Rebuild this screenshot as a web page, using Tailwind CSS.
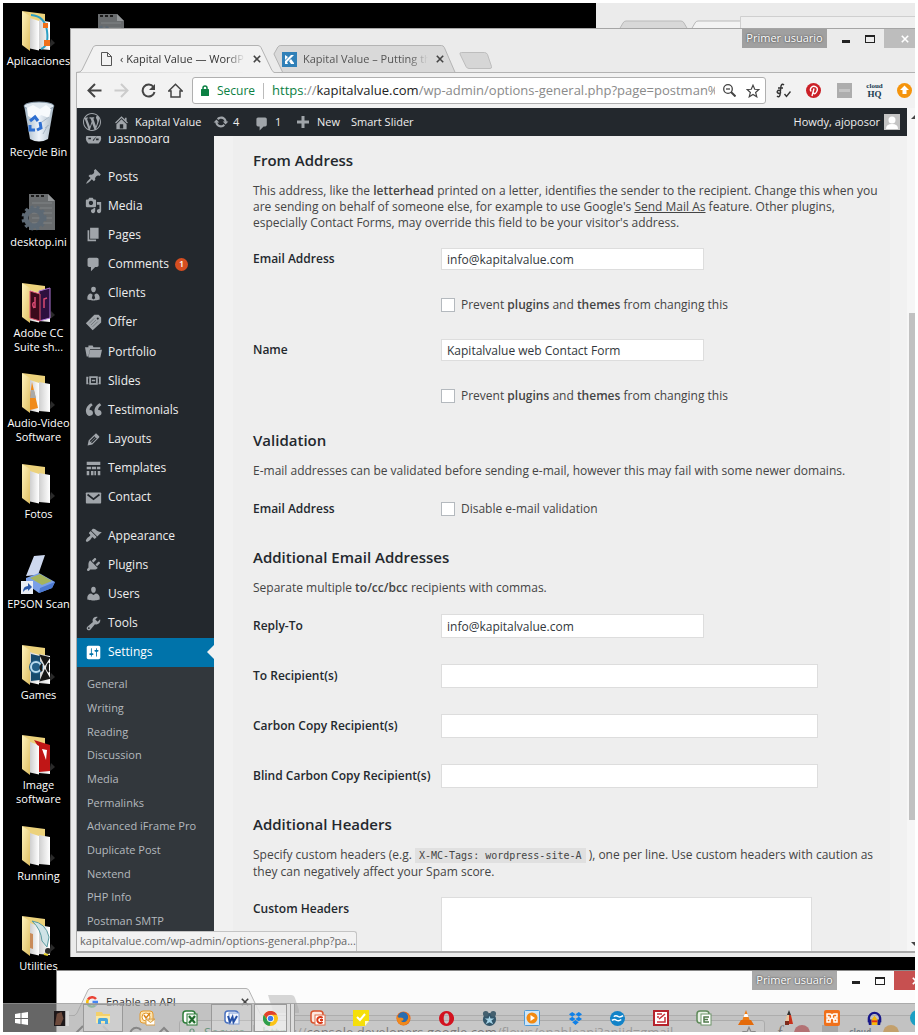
<!DOCTYPE html>
<html lang="en">
<head>
<meta charset="utf-8">
<title>Kapital Value — WordPress</title>
<script src="https://cdn.jsdelivr.net/npm/@tailwindcss/browser@4"></script>
</head>
<body class="h-screen overflow-hidden bg-white p-[3px] font-[family-name:'Open_Sans','Noto_Sans',sans-serif] text-xs text-[#444]">

<!-- Shared icon shapes -->
<svg class="absolute size-0" aria-hidden="true">
  <defs>
    <linearGradient id="gFront" x1="0" y1="0" x2="1" y2="1"><stop offset="0" stop-color="#fff3bd"/><stop offset="1" stop-color="#dfbf62"/></linearGradient>
    <linearGradient id="gPaper" x1="0" y1="0" x2="1" y2="0"><stop offset="0" stop-color="#cfcfcf"/><stop offset="1" stop-color="#ffffff"/></linearGradient>
    <linearGradient id="gBin" x1="0" y1="0" x2="1" y2="0"><stop offset="0" stop-color="#9fb2c2"/><stop offset=".5" stop-color="#eef4fa"/><stop offset="1" stop-color="#a7b8c6"/></linearGradient>
  </defs>
  <symbol id="folder" viewBox="0 0 36 42">
    <path d="M28 38l6-5-4-4z" fill="#2a2a2a"/>
    <path d="M1 1l23 3v10L9 12z" fill="#ecd27c"/>
    <path d="M18 10l11 2v28l-11-1z" fill="url(#gPaper)"/>
    <path d="M9 8l9 3v29.500l-9-2z" fill="url(#gPaper)"/>
    <path d="M1 1l8 5v35l-8-6z" fill="url(#gFront)"/>
  </symbol>
  <symbol id="ini" viewBox="0 0 36 38">
    <path d="M8 1h19l7 7v29H8z" fill="#696c6e"/><path d="M27 1l7 7h-7z" fill="#95989a"/>
    <path d="M10 3h3M15 3h3M20 3h3" stroke="#1c1c1c" stroke-width="2"/>
    <path d="M11 10h20M11 15h20M11 20h20M11 25h20M11 30h20" stroke="#818486"/>
    <circle cx="13" cy="25" r="8" fill="none" stroke="#5d6974" stroke-width="5"/>
    <circle cx="13" cy="25" r="11" fill="none" stroke="#5d6974" stroke-width="3" stroke-dasharray="3 3"/>
  </symbol>
  <symbol id="x" viewBox="0 0 10 10"><path d="M1 1l8 8M9 1l-8 8" stroke="currentColor" stroke-width="2" fill="none"/></symbol>
  <symbol id="comment" viewBox="0 0 20 20"><path d="M5 2h9c1.100 0 2 .9 2 2v7c0 1.100-.9 2-2 2h-2l-5 5v-5H5c-1.100 0-2-.9-2-2V4c0-1.100.9-2 2-2z"/></symbol>
</svg>

<div class="relative h-full w-full overflow-hidden bg-black">

  <!-- Desktop shortcuts -->
  <div class="absolute top-[7px] left-0 grid h-[996px] w-[71px] auto-rows-fr text-center text-[11px] leading-[14px] whitespace-nowrap text-white">
    <div class="flex flex-col items-center gap-[2px]"><svg class="h-[42px] w-9"><use href="#folder"/><path d="M10 5q14 1 16 16t-6 18" fill="none" stroke="#2b9fc4" stroke-width="2"/><rect x="22" y="13" width="5" height="5" fill="#f0701a"/><rect x="23" y="30" width="6" height="6" fill="#f0701a"/></svg><span>Aplicaciones</span></div>
    <div class="flex flex-col items-center gap-[2px]"><svg class="h-[42px] w-9" viewBox="0 0 36 42"><path d="M3 4h30l-6 34q-9 5-18 0z" fill="url(#gBin)"/><ellipse cx="18" cy="5" rx="15" ry="4" fill="#dfe8ef" stroke="#8799a8"/><path d="M6 7l6-3 7 4 6-4 5 4-2 9-8-3-6 5-7-4z" fill="#f7fafc"/><path d="M9 20l5-4 3 4M19 21l1 6-4 2M14 29H9l0-5" fill="none" stroke="#2e6fd0" stroke-width="3"/><path d="M21 21l7-5M22 33l5-9M24 27l4-3" stroke="#a9b8c6"/></svg><span>Recycle Bin</span></div>
    <div class="flex flex-col items-center gap-[2px]"><svg class="h-[42px] w-9"><use href="#ini"/></svg><span>desktop.ini</span></div>
    <div class="flex flex-col items-center gap-[2px]"><svg class="h-[42px] w-9"><use href="#folder"/><path d="M18 9l11-3v30l-11 3z" fill="#2d103f" stroke="#b077d8"/><path d="M9 9l10 3v27l-10-3z" fill="#3c0a1c" stroke="#e0556e"/><path d="M13 26q-3-5 1-6v-5 11M23 26v-9l3-1" fill="none" stroke="#d94a72" stroke-width="1.500"/></svg><span>Adobe CC<br>Suite sh...</span></div>
    <div class="flex flex-col items-center gap-[2px]"><svg class="h-[42px] w-9"><use href="#folder"/><path d="M11 10l6 26-8 2V24z" fill="#f08a1a"/><path d="M10 18l3 0 2 8H9z" fill="#a9a9a9"/></svg><span>Audio-Video<br>Software</span></div>
    <div class="flex flex-col items-center gap-[2px]"><svg class="h-[42px] w-9"><use href="#folder"/></svg><span>Fotos</span></div>
    <div class="flex flex-col items-center gap-[2px]"><svg class="h-[42px] w-9" viewBox="0 0 36 42"><path d="M13 3l11-1-7 20-12 1z" fill="#cdd8ef"/><path d="M5 25l13-5 16 9-3 6-13 5L5 31z" fill="#7aa0e8"/><path d="M9 25l10-4 12 7-10 4z" fill="#a5b45c"/><path d="M18 40l13-5 3-6-15 6z" fill="#4c79d2"/><rect x="-1" y="28" width="13" height="13" fill="#e9edf3"/><path d="M2 39q0-6 5-6v-3l4 4-4 4v-2q-3 0-5 3z" fill="#2a58a8"/></svg><span>EPSON Scan</span></div>
    <div class="flex flex-col items-center gap-[2px]"><svg class="h-[42px] w-9"><use href="#folder"/><path d="M10 10l9 2v24l-9 1z" fill="#174a6c"/><circle cx="15" cy="23" r="7" fill="#235f88"/><circle cx="15" cy="23" r="5" fill="none" stroke="#b9dbef" stroke-width="2"/><path d="M20 12l8 2-4 6zM20 36l8-2-4-7zM21 20q-3 4 0 7M28 19q-4 5 0 9" fill="#161616" stroke="#161616" stroke-width="2"/></svg><span>Games</span></div>
    <div class="flex flex-col items-center gap-[2px]"><svg class="h-[42px] w-9"><use href="#folder"/><path d="M13 6l16 5v26l-11 1V14z" fill="#c01616"/><path d="M9 8l9 4v28l-9-3z" fill="url(#gPaper)"/><path d="M21 15l5 1-1 10z" fill="#fff"/></svg><span>Image<br>software</span></div>
    <div class="flex flex-col items-center gap-[2px]"><svg class="h-[42px] w-9"><use href="#folder"/></svg><span>Running</span></div>
    <div class="flex flex-col items-center gap-[2px]"><svg class="h-[42px] w-9"><use href="#folder"/><path d="M11 6q14 2 17 16l-2 10-5-6q-1-12-10-20z" fill="#cfe3e6" stroke="#5a9ba0"/><path d="M9 18l3 1v15l-3-1z" fill="#c98b5a"/><circle cx="27" cy="36" r="3" fill="#2a2a2a"/><path d="M23 39l4 1" stroke="#e5d02a" stroke-width="2"/></svg><span>Utilities</span></div>
  </div>
  <svg class="absolute top-[10px] left-[87px] h-[38px] w-9"><use href="#ini"/></svg>

  <!-- Window behind, upper right -->
  <div class="absolute top-0 right-0 flex h-8 w-[319px] items-end bg-[#ebebeb]" aria-hidden="true">
    <svg class="h-full w-full" viewBox="0 0 319 32" preserveAspectRatio="xMaxYMin slice">
      <path d="M20 32l7-12q1-2 3-2h55q2 0 3 2l7 12" fill="#d8d8d8" stroke="#b9b9b9"/>
      <path d="M92 32l7-12q1-2 3-2h60v14" fill="#f3f3f3" stroke="#b9b9b9"/>
      <path d="M144.500 40V13.500H330V40z" fill="#efefef" stroke="#cfcfcf"/>
    </svg>
  </div>

  <!-- Console window, lower edge -->
  <section class="absolute top-[967px] right-0 bottom-0 left-[53px] border-l border-t border-[#888] bg-[#fcfcfc]" aria-label="Enable an API">
    <div class="flex h-[44px] items-start justify-between">
      <div class="relative mt-[17px] ml-[14px] h-7 w-[196px]">
        <svg class="absolute inset-0 h-full w-full" viewBox="0 0 196 28" preserveAspectRatio="none"><path d="M0 28q5 0 6-3L17 2q1-1.500 3-1.500h155q2 0 3 2l11 23q1 2.500 6 2.500" fill="#f1f1f1" stroke="#b3b3b3"/></svg>
        <div class="relative flex h-full items-center gap-2 pr-[18px] pl-[15px] text-[#333]">
          <svg class="size-3" viewBox="0 0 24 24" fill="none" stroke-width="5"><path d="M20 6A10 10 0 0 0 4 7" stroke="#ea4335"/><path d="M4 7a10 10 0 0 0 0 10" stroke="#fbbc05"/><path d="M4 17a10 10 0 0 0 14 2" stroke="#34a853"/><path d="M18 19q4-3 4-7h-9" stroke="#4285f4"/></svg>
          <span class="flex-1 text-[11px]">Enable an API</span>
          <button type="button" aria-label="Close tab"><svg class="size-2 text-[#444]"><use href="#x"/></svg></button>
        </div>
      </div>
      <svg class="mt-6 h-5 w-8" viewBox="0 0 32 20"><path d="M1 0h23q3 0 4 3l5 15H9q-2 0-3-2z" fill="#d6d6d6"/></svg>
      <div class="flex flex-1 justify-end">
        <span class="flex h-[19px] w-[85px] items-center justify-center bg-[#a9a9a9] text-[11px] text-white text-shadow-[0_0_2px_#222]">Primer usuario</span>
        <button type="button" aria-label="Minimize" class="flex h-[19px] w-[38px] items-center justify-center"><span class="mt-1 h-[3px] w-2 bg-[#222]"></span></button>
        <button type="button" aria-label="Maximize" class="flex h-[19px] w-[19px] items-center"><span class="h-2 w-[10px] border border-t-2 border-[#222]"></span></button>
        <button type="button" aria-label="Close" class="flex h-[19px] w-[21px] items-center overflow-hidden bg-[#c75050] pl-[18px] text-white"><svg class="size-2 shrink-0" viewBox="0 0 10 10"><use href="#x"/></svg></button>
      </div>
    </div>
    <div class="flex h-[34px] items-center border-t border-[#bbb] bg-[#f2f2f2] px-4 text-[13px] text-[#888]">
      <svg class="h-4 w-[106px]" viewBox="0 0 106 16" fill="none" stroke="#555" stroke-width="2"><path d="M10 1L3 8l7 7M68 5a6 6 0 1 0 1 6M84 10l7-7 7 7"/><path d="M30 1l7 7-7 7" stroke="#ccc"/></svg>
      <div class="flex h-[26px] flex-1 items-center gap-2 rounded-[3px] border border-[#b5b5b5] bg-white px-2 whitespace-nowrap">
        <svg class="h-3 w-2" viewBox="0 0 10 12"><path d="M2.500 6V3.500a2.500 2.500 0 0 1 5 0V6" fill="none" stroke="#0b8043" stroke-width="1.500"/><rect y="5" width="10" height="7" fill="#0b8043"/></svg>
        <span class="text-[#0b8043]">Secure</span><span class="h-4 w-px bg-[#ccc]"></span>
        <span class="flex-1"><span class="text-[#0b8043]">https</span>://<span class="text-[#333]">console.developers.google.com</span>/flows/enableapi?apiid=gmail</span>
        <svg class="size-[14px]" viewBox="0 0 24 24" fill="none" stroke="#555" stroke-width="2"><path d="M12 2l3 7 7 .500-5.500 5 2 7.500-6.500-4-6.500 4 2-7.500L2 9.500 9 9z"/></svg>
      </div>
      <div class="flex w-[134px] items-center justify-between pl-3">
        <span class="font-[family-name:'Liberation_Serif'] text-lg text-[#333] italic">f</span><span class="size-4 rounded-full bg-[#cb2027]"></span><span class="size-4 bg-[#aaa]"></span><span class="text-[8px] font-bold text-[#1d4257]">cloud</span><span class="size-4 rounded-full bg-[#f59a12]"></span>
      </div>
    </div>
  </section>

  <!-- Main browser window -->
  <section class="absolute top-[25px] right-0 bottom-[75px] left-[67px] flex flex-col border-l border-t border-[#a5a5a5] bg-[#ebebeb] pb-1 pl-[5px]" aria-label="Browser">
    <div class="flex h-[44px] shrink-0 items-start">
      <div class="relative z-10 mt-4 h-[28px] w-[203px] shrink-0">
        <svg class="absolute inset-0 h-full w-full" viewBox="0 0 203 28" preserveAspectRatio="none"><path d="M0 27.500q5 0 6-2.500L17 2.500Q18 .500 20 .500h162q2 0 3 2l11 23q1 2.500 6 2.500" fill="#f2f2f2" stroke="#b3b3b3"/></svg>
        <div class="relative flex h-full items-center pr-[18px] pl-[25px] text-[11px] text-[#333]">
          <svg class="h-[14px] w-[11px]" viewBox="0 0 11 14" fill="none" stroke="#555"><path d="M.5.500h6l4 4v9H.5zM6.500.500v4h4"/></svg>
          <span class="ml-2 flex-1 overflow-hidden mask-r-from-85% whitespace-nowrap">‹ Kapital Value — WordPress</span>
          <button type="button" aria-label="Close tab" class="ml-2"><svg class="size-2 text-[#444]" viewBox="0 0 10 10"><use href="#x"/></svg></button>
        </div>
      </div>
      <div class="relative -ml-2 mt-4 h-[28px] w-[190px] shrink-0">
        <svg class="absolute inset-0 h-full w-full" viewBox="0 0 194 28" preserveAspectRatio="none"><path d="M12 27.500L3 9 7 2q1-1.500 3-1.500h164q2 0 3 2l11 25z" fill="#d9d9d9" stroke="#b3b3b3"/></svg>
        <div class="relative flex h-full items-center pr-[17px] pl-[11px] text-[11px] text-[#555]">
          <svg class="size-[15px]" viewBox="0 0 15 15"><rect width="15" height="15" fill="#3080b8"/><path d="M3 3v5l3-3zM12 3H9L3 9v3h3l-1-2zM7 9l2-2 3 4v1H9z" fill="#fff"/></svg>
          <span class="ml-[6px] flex-1 overflow-hidden mask-r-from-85% whitespace-nowrap">Kapital Value – Putting the value</span>
          <button type="button" aria-label="Close tab" class="ml-2"><svg class="size-2 text-[#444]" viewBox="0 0 10 10"><use href="#x"/></svg></button>
        </div>
      </div>
      <button type="button" aria-label="New tab" class="mt-[23px] ml-[-2px]"><svg class="h-[17px] w-[33px]" viewBox="0 0 33 17"><path d="M2.500.500h23q2 0 3 2l4 12q.500 2-1.500 2H10q-2 0-3-2L1 2Q.500.500 2.500.500z" fill="#d6d6d6" stroke="#bdbdbd"/></svg></button>
      <div class="flex flex-1 justify-end">
        <span class="flex h-[19px] w-[85px] items-center justify-center bg-[#a0a0a0] text-[11px] text-white text-shadow-[0_0_2px_#222]">Primer usuario</span>
        <button type="button" aria-label="Minimize" class="flex h-[19px] w-[38px] items-center justify-center"><span class="mt-[6px] h-[3px] w-2 bg-[#222]"></span></button>
        <button type="button" aria-label="Maximize" class="flex h-[19px] w-[19px] items-center"><span class="h-2 w-[10px] border border-t-2 border-[#222]"></span></button>
        <button type="button" aria-label="Close" class="flex h-[19px] w-[31px] items-center bg-[#bdbdbd] pl-[17px] text-white"><svg class="size-2" viewBox="0 0 10 10"><use href="#x"/></svg></button>
      </div>
    </div>

    <!-- Address toolbar -->
    <div class="-mt-px flex h-9 shrink-0 items-center border-t border-l border-[#b3b3b3] bg-[#f2f2f2] pl-[10px]">
      <div class="flex w-[105px] gap-3 text-[#444]">
        <button type="button" aria-label="Back"><svg class="size-[15px]" viewBox="0 0 15 15" fill="none" stroke="currentColor" stroke-width="2"><path d="M14.500 7.500H2M8 1L1.500 7.500 8 14"/></svg></button>
        <button type="button" aria-label="Forward" disabled class="text-[#ccc]"><svg class="size-[15px]" viewBox="0 0 15 15" fill="none" stroke="currentColor" stroke-width="2"><path d="M.5 7.500H13M7 1l6.500 6.500L7 14"/></svg></button>
        <button type="button" aria-label="Reload"><svg class="size-[15px]" viewBox="0 0 15 15"><path d="M12.500 4a6 6 0 1 0 1 5" fill="none" stroke="currentColor" stroke-width="2"/><path d="M14 1v6H8z" fill="currentColor"/></svg></button>
        <button type="button" aria-label="Home"><svg class="size-[15px]" viewBox="0 0 15 15" fill="none" stroke="currentColor" stroke-width="1.500"><path d="M.7 8l6.800-6.800L14.300 8H12v6H3V8z"/></svg></button>
      </div>
      <div class="flex h-[27px] min-w-0 flex-1 items-center rounded-[3px] border border-[#b0b0b0] bg-white pr-[5px] pl-2">
        <svg class="h-[11px] w-2 shrink-0" viewBox="0 0 8 11"><path d="M2 5V3a2 2 0 0 1 4 0v2" fill="none" stroke="#0b8043" stroke-width="1.500"/><rect y="4" width="8" height="7" rx=".5" fill="#0b8043"/></svg>
        <span class="ml-2 text-[#0b8043]">Secure</span>
        <span class="mx-2 h-4 w-px shrink-0 bg-[#bbb]"></span>
        <div role="textbox" aria-label="Address" tabindex="0" class="min-w-0 flex-1 overflow-hidden text-[13px] whitespace-nowrap text-[#8a8a8a]"><span class="text-[#0b8043]">https</span>://<span class="text-[#222]">kapitalvalue.com</span>/wp-admin/options-general.php?page=postman%2Fconfig</div>
        <button type="button" aria-label="Zoom out" class="ml-2 text-[#444]"><svg class="size-[13px]" viewBox="0 0 13 13" fill="none" stroke="currentColor" stroke-width="1.300"><circle cx="5" cy="5" r="4.300"/><path d="M3 5h4"/><path d="M8 8l4.500 4.500" stroke-width="2"/></svg></button>
        <button type="button" aria-label="Bookmark" class="ml-[10px] text-[#444]"><svg class="size-[14px]" viewBox="0 0 24 24" fill="none" stroke="currentColor" stroke-width="2"><path d="M12 2l3 7 7 .5-5.500 5 2 7.500-6.500-4-6.500 4 2-7.500L2 9.500 9 9z"/></svg></button>
      </div>
      <div class="flex w-[149px] shrink-0 items-center pl-[10px]">
        <button type="button" aria-label="Math extension" class="w-[18px]"><svg class="h-4 w-[15px]" viewBox="0 0 15 16" fill="none" stroke="#333" stroke-width="1.400"><path d="M8 2q-2-2-3 1L4 12q-1 3-3 1M2 5h5M5 9.500a2 1.500 0 1 1-1-2M8.500 11l2 2.500 4-5"/></svg></button>
        <button type="button" aria-label="Pin" class="ml-3"><svg class="size-[15px]" viewBox="0 0 15 15"><circle cx="7.500" cy="7.500" r="7.500" fill="#cb2027"/><path d="M5 8.500Q3.500 6 5.500 4.200T10 4t.500 5-3 .5M8 5.500L6 13" fill="none" stroke="#fff" stroke-width="1.400"/></svg></button>
        <button type="button" aria-label="Extension" class="ml-4 flex size-[15px] items-center bg-[#adadad] px-[2px]"><span class="h-[3px] w-full bg-[#c4c4c4]"></span></button>
        <button type="button" aria-label="cloudHQ" class="ml-[14px] flex w-[17px] flex-col items-center font-[family-name:'Liberation_Serif',serif] text-[9px] leading-[9px] font-bold text-[#173a50]"><span class="text-[7px] leading-[7px]">cloud</span><span>HQ</span></button>
        <button type="button" aria-label="Updates" class="ml-[14px]"><svg class="size-[15px]" viewBox="0 0 15 15"><circle cx="7.500" cy="7.500" r="7.500" fill="#f5940c"/><path d="M7.500 2.500L12 7H9.500v4h-4V7H3z" fill="#fff"/></svg></button>
      </div>
    </div>

    <!-- Page -->
    <div class="relative flex min-h-0 flex-1 border-b-2 border-l border-[#a9a9a9] bg-[#f1f1f1]">
      <div class="flex min-w-0 flex-1 flex-col">
        <header class="z-10 flex h-7 shrink-0 items-center bg-[#23282d] pr-[7px] pl-[6px] text-[11px] text-[#eee]">
          <svg class="size-[18px]" viewBox="0 0 20 20" fill="#a0a5aa"><path d="M20 10c0-5.510-4.490-10-10-10C4.480 0 0 4.490 0 10c0 5.520 4.480 10 10 10 5.510 0 10-4.480 10-10zM7.780 15.370L4.370 6.220c.55-.02 1.170-.08 1.170-.08.5-.06.44-1.130-.06-1.110 0 0-1.450.11-2.370.11-.18 0-.37 0-.58-.01C4.120 2.690 6.870 1.110 10 1.110c2.330 0 4.450.87 6.050 2.340-.68-.11-1.650.39-1.650 1.580 0 .74.45 1.360.9 2.100.35.61.55 1.360.55 2.460 0 1.490-1.400 5-1.400 5l-3.030-8.370c.54-.02.82-.17.82-.17.5-.05.44-1.250-.06-1.220 0 0-1.440.12-2.380.12-.87 0-2.330-.12-2.330-.12-.5-.03-.56 1.200-.06 1.220l.92.08 1.260 3.410zM17.410 10c.24-.64.74-1.870.43-4.250.7 1.290 1.050 2.710 1.050 4.250 0 3.290-1.730 6.240-4.400 7.780.97-2.590 1.940-5.200 2.920-7.780zM6.100 18.090C3.120 16.650 1.110 13.530 1.110 10c0-1.300.23-2.480.72-3.590C3.250 10.300 4.670 14.200 6.100 18.090zm4.030-6.630l2.580 6.980c-.86.29-1.760.45-2.710.45-.79 0-1.570-.11-2.290-.33.81-2.380 1.620-4.740 2.420-7.100z"/></svg>
          <a href="#" class="ml-3 flex w-[100px] items-center gap-[5px]"><svg class="size-[17px]" viewBox="0 0 20 20" fill="#a0a5aa"><path d="M16 8.500l1.530 1.530-1.060 1.060L10 4.600l-6.470 6.490-1.060-1.060L10 2.500l4 4v-2h2v4zm-6-2.460l6 5.990V18H4v-5.970zM12 17v-5H8v5h4z"/></svg>Kapital Value</a>
          <a href="#" class="flex w-[41px] items-center gap-1"><svg class="size-4" viewBox="0 0 20 20" fill="#a0a5aa"><path d="M10.200 3.280c3.530 0 6.430 2.610 6.920 6h2.080l-3.500 4-3.500-4h2.320c-.45-1.970-2.210-3.450-4.320-3.450-1.450 0-2.730.71-3.540 1.780L4.950 5.660C6.230 4.200 8.110 3.280 10.200 3.280zm-.4 13.440c-3.520 0-6.430-2.610-6.920-6H.8l3.500-4c1.170 1.330 2.330 2.670 3.500 4H5.480c.45 1.970 2.210 3.450 4.320 3.450 1.450 0 2.730-.71 3.540-1.780l1.710 1.950c-1.280 1.460-3.150 2.380-5.250 2.380z"/></svg>4</a>
          <a href="#" class="flex w-[43px] items-center gap-[5px]"><svg class="mt-1 size-4" fill="#a0a5aa"><use href="#comment"/></svg>1</a>
          <a href="#" class="flex w-[54px] items-center gap-[8px]"><svg class="size-3" viewBox="0 0 12 12"><path d="M6 0v12M0 6h12" stroke="#a0a5aa" stroke-width="3"/></svg>New</a>
          <a href="#">Smart Slider</a>
          <a href="#" class="ml-auto flex items-center gap-1">Howdy, ajoposor<svg class="size-4" viewBox="0 0 16 16"><rect width="16" height="16" fill="#c4c4c4"/><circle cx="8" cy="6" r="3.500" fill="#fff"/><path d="M2 15q0-5 6-5t6 5z" fill="#fff"/></svg></a>
        </header>

        <div class="flex min-h-0 flex-1">
          <!-- Admin menu -->
          <nav class="flex w-[137px] shrink-0 flex-col overflow-hidden bg-[#23282d] text-[#eee]">
            <a href="#" class="-mt-3 flex h-[29px] shrink-0 items-center gap-[6px] pl-2"><svg class="size-[17px]" viewBox="0 0 20 20" fill="#a0a5aa"><path fill-rule="evenodd" d="M4 16a9 8 0 1 1 12 0zM10 13l4-6-5 5zM4 9h3v2H4zM13 10h3v2h-3zM9 5h2v2H9z"/></svg>Dashboard</a>
            <div class="mt-[9px] grid h-[350px] shrink-0 auto-rows-fr">
              <a href="#" class="flex items-center gap-[6px] pl-2"><svg class="size-[17px]" viewBox="0 0 20 20" fill="#a0a5aa"><path d="M10.440 3.020l1.820-1.820 6.360 6.350-1.830 1.820c-1.050-.68-2.480-.57-3.410.36l-.75.75c-.92.93-1.040 2.350-.35 3.410l-1.830 1.820-2.410-2.410-2.800 2.790c-.42.42-3.380 2.710-3.800 2.290s1.860-3.390 2.280-3.810l2.790-2.790L4.100 9.360l1.830-1.820c1.050.69 2.480.57 3.400-.36l.75-.75c.93-.92 1.050-2.350.36-3.410z"/></svg>Posts</a>
              <a href="#" class="flex items-center gap-[6px] pl-2"><svg class="size-[17px]" viewBox="0 0 20 20" fill="#a0a5aa"><path d="M13 11V4c0-.55-.45-1-1-1h-1.670L9 1H5L3.670 3H2c-.55 0-1 .45-1 1v7c0 .55.45 1 1 1h10c.55 0 1-.45 1-1zM7 4.500c1.380 0 2.500 1.120 2.500 2.500S8.380 9.500 7 9.500 4.500 8.380 4.500 7 5.620 4.500 7 4.500zM14 6h5v10.500c0 1.380-1.120 2.500-2.500 2.500S14 17.880 14 16.500s1.120-2.500 2.500-2.500c.17 0 .34.02.5.05V9h-3V6zm-4 8.050V13h2v3.500c0 1.380-1.120 2.500-2.500 2.500S7 17.880 7 16.500 8.120 14 9.500 14c.17 0 .34.02.5.05z"/></svg>Media</a>
              <a href="#" class="flex items-center gap-[6px] pl-2"><svg class="size-[17px]" viewBox="0 0 20 20" fill="#a0a5aa"><path d="M6 15V2h10v13H6zm-1 1h8v2H3V5h2v11z"/></svg>Pages</a>
              <a href="#" class="flex items-center gap-[6px] pl-2"><svg class="size-[17px]" fill="#a0a5aa"><use href="#comment"/></svg>Comments<span class="flex size-[13px] items-center justify-center rounded-full bg-[#d54e21] text-[9px] font-semibold text-white">1</span></a>
              <a href="#" class="flex items-center gap-[6px] pl-2"><svg class="size-[17px]" viewBox="0 0 20 20" fill="#a0a5aa"><path d="M10 8.500c-2.200 0-2.700-3-2.700-3C7 3.500 7.800 2 10 2s3 1.500 2.700 3.500c0 0-.5 3-2.700 3z"/><path d="M7 10l2 1.500-1 4 2 1.500 2-1.500-1-4L13 10c2.500 0 4.200 2.300 4.200 4.500V17s-3.600 1.100-7.200 1.100S2.800 17 2.800 17v-2.500C2.800 12.300 4.500 10 7 10z"/></svg>Clients</a>
              <a href="#" class="flex items-center gap-[6px] pl-2"><svg class="size-[17px]" viewBox="0 0 20 20" fill="#a0a5aa"><path fill-rule="evenodd" d="M1 11L11 1h5l3 3v6L9 19zM15 4a1.200 1.200 0 1 0 .1 0z"/><path d="M5 11l6-6M7 13l6-6M9 15l6-6" stroke="#6c7277"/></svg>Offer</a>
              <a href="#" class="flex items-center gap-[6px] pl-2"><svg class="size-[17px]" viewBox="0 0 20 20" fill="#a0a5aa"><path d="M0 5h4V3h5l1 2h8v2H6L4 16H2zM6 8h14l-2 9H4z"/></svg>Portfolio</a>
              <a href="#" class="flex items-center gap-[6px] pl-2"><svg class="size-[17px]" viewBox="0 0 20 20" fill="none" stroke="#a0a5aa" stroke-width="2"><rect x="6" y="6" width="8" height="8"/><path d="M4 6.500H2.500v7H4M16 6.500h1.500v7H16M8 10h4"/></svg>Slides</a>
              <a href="#" class="flex items-center gap-[6px] pl-2"><svg class="size-[17px]" viewBox="2 2 16 16" fill="#a0a5aa"><path d="M9.490 13.220c0-.74-.2-1.380-.61-1.900-.62-.78-1.830-.88-2.530-.72-.29-1.650 1.110-3.750 2.920-4.650L7.880 4c-2.730 1.300-5.420 4.280-4.960 8.050C3.210 14.430 4.590 16 6.540 16c.85 0 1.560-.25 2.120-.75s.83-1.180.83-2.030zm8.050 0c0-.74-.2-1.380-.61-1.900-.63-.78-1.830-.88-2.530-.72-.29-1.650 1.110-3.750 2.920-4.650L15.930 4c-2.730 1.300-5.410 4.280-4.950 8.050.29 2.380 1.660 3.950 3.610 3.950.85 0 1.560-.25 2.120-.75s.83-1.180.83-2.030z"/></svg>Testimonials</a>
              <a href="#" class="flex items-center gap-[6px] pl-2"><svg class="size-[17px]" viewBox="0 0 20 20" fill="#a0a5aa"><path d="M13.890 3.390l2.710 2.720c.46.46.42 1.240.03 1.640l-8.010 8.020-5.560 1.160 1.160-5.580s7.600-7.630 7.990-8.030c.39-.39 1.220-.39 1.680.07zm-2.730 2.790l-5.590 5.610 1.110 1.110 5.540-5.650zm-2.970 8.230l5.580-5.600-1.070-1.080-5.590 5.600z"/></svg>Layouts</a>
              <a href="#" class="flex items-center gap-[6px] pl-2"><svg class="size-[17px]" viewBox="0 0 20 20" fill="#a0a5aa"><path d="M2 2h16v4H2zM2 8h5v3H2zM8 8h5v3H8zM14 8h4v3h-4zM2 13h3v5H2zM7 13h3v5H7zM11 13h2v5h-2zM15 13h3v5h-3z"/></svg>Templates</a>
              <a href="#" class="flex items-center gap-[6px] pl-2"><svg class="size-[17px]" viewBox="0 0 20 20"><rect x="1" y="4" width="18" height="13" rx="1" fill="#a0a5aa"/><path d="M3 6.500l7 5.500 7-5.500" fill="none" stroke="#23282d" stroke-width="2"/></svg>Contact</a>
            </div>
            <div class="mt-[9px] grid h-[146px] shrink-0 auto-rows-fr">
              <a href="#" class="flex items-center gap-[6px] pl-2"><svg class="size-[17px]" viewBox="0 0 20 20" fill="#a0a5aa"><path d="M14.480 11.060L7.410 3.990l1.500-1.500c.5-.56 2.300-.47 3.510.32 1.210.8 1.430 1.280 2.910 2.100 1.180.64 2.450 1.260 4.450.85zm-.71.710L6.700 4.700 4.930 6.470c-.39.39-.39 1.020 0 1.410l1.060 1.060c.39.39.39 1.030 0 1.420-.6.6-1.430 1.110-2.210 1.690-.35.26-.7.53-1.010.84C1.430 14.230.4 16.080 1.400 17.070c.99 1 2.840-.03 4.180-1.360.31-.31.58-.66.85-1.020.57-.78 1.080-1.610 1.690-2.210.39-.39 1.020-.39 1.410 0l1.060 1.060c.39.39 1.020.39 1.410 0z"/></svg>Appearance</a>
              <a href="#" class="flex items-center gap-[6px] pl-2"><svg class="size-[17px]" viewBox="0 0 20 20" fill="#a0a5aa"><path d="M13.110 4.360L9.870 7.600 8 5.730l3.240-3.240c.35-.34 1.050-.2 1.560.32.52.51.66 1.210.31 1.550zm-8 1.770l.91-1.120 9.010 9.010-1.190.84c-.71.71-2.630 1.160-3.820 1.160H6.140L4.900 17.260c-.59.59-1.540.59-2.120 0-.59-.58-.59-1.530 0-2.120l1.240-1.240v-3.880c0-1.130.4-3.190 1.090-3.890zm7.260 3.970l3.240-3.240c.34-.35 1.040-.21 1.550.31.52.51.66 1.210.31 1.550l-3.240 3.250z"/></svg>Plugins</a>
              <a href="#" class="flex items-center gap-[6px] pl-2"><svg class="size-[17px]" viewBox="0 0 20 20" fill="#a0a5aa"><path d="M10 9.250c-2.270 0-2.730-3.440-2.730-3.440C7 4.020 7.820 2 9.970 2c2.160 0 2.980 2.020 2.710 3.810 0 0-.41 3.440-2.680 3.440zm0 2.570L12.720 10c2.390 0 4.520 2.330 4.520 4.530v2.490s-3.650 1.130-7.240 1.130c-3.650 0-7.240-1.130-7.240-1.130v-2.490c0-2.250 1.940-4.480 4.470-4.480z"/></svg>Users</a>
              <a href="#" class="flex items-center gap-[6px] pl-2"><svg class="size-[17px]" viewBox="0 0 20 20" fill="#a0a5aa"><path d="M16.680 9.770c-1.340 1.340-3.300 1.670-4.950.99l-5.410 6.520c-.99.99-2.590.99-3.580 0s-.99-2.590 0-3.570l6.520-5.420c-.68-1.650-.35-3.610.99-4.950 1.280-1.280 3.120-1.620 4.720-1.060l-2.890 2.890 2.820 2.820 2.860-2.870c.53 1.580.18 3.390-1.080 4.650zM3.810 16.210c.4.39 1.040.39 1.430 0 .4-.4.4-1.040 0-1.430-.39-.4-1.030-.4-1.430 0-.39.39-.39 1.030 0 1.430z"/></svg>Tools</a>
              <a href="#" aria-current="page" class="flex items-center gap-[6px] bg-[#0073aa] pl-2 text-white"><svg class="size-[17px]" viewBox="0 0 20 20" fill="#fff"><path d="M18 16V4c0-1.100-.9-2-2-2H4c-1.100 0-2 .9-2 2v12c0 1.100.9 2 2 2h12c1.100 0 2-.9 2-2zM8 11h1c.55 0 1 .45 1 1s-.45 1-1 1H8v1.500c0 .28-.22.5-.5.5s-.5-.22-.5-.5V13H6c-.55 0-1-.45-1-1s.45-1 1-1h1V5.500c0-.28.22-.5.5-.5s.5.22.5.5V11zm5-2h-1c-.55 0-1-.45-1-1s.45-1 1-1h1V5.500c0-.28.22-.5.5-.5s.5.22.5.5V7h1c.55 0 1 .45 1 1s-.45 1-1 1h-1v5.500c0 .28-.22.5-.5.5s-.5-.22-.5-.5V9z"/></svg><span class="flex-1">Settings</span><svg class="h-[14px] w-[7px]" viewBox="0 0 7 14"><path d="M7 0v14L0 7z" fill="#f1f1f1"/></svg></a>
            </div>
            <div class="min-h-[265px] flex-1 bg-[#32373c] pt-[6px]">
              <div class="grid h-[260px] auto-rows-fr items-center pl-[10px] text-[11px] text-[#b4b9be]">
                <a href="#">General</a><a href="#">Writing</a><a href="#">Reading</a><a href="#">Discussion</a><a href="#">Media</a><a href="#">Permalinks</a><a href="#">Advanced iFrame Pro</a><a href="#">Duplicate Post</a><a href="#">Nextend</a><a href="#">PHP Info</a><a href="#">Postman SMTP</a>
              </div>
            </div>
          </nav>

          <!-- Settings form -->
          <main class="min-w-0 flex-1 overflow-hidden pr-[17px] pl-[19px]">
            <form class="h-full bg-[#eee] pt-3 pl-5 whitespace-nowrap">
              <h2 class="text-[15px] leading-6 font-semibold text-[#23282d]">From Address</h2>
              <p class="mt-[11px] leading-4">This address, like the <b class="font-semibold">letterhead</b> printed on a letter, identifies the sender to the recipient. Change this when you<br>are sending on behalf of someone else, for example to use Google's <a href="#" class="underline">Send Mail As</a> feature. Other plugins,<br>especially Contact Forms, may override this field to be your visitor's address.</p>
              <div class="mt-[17px] grid grid-cols-[188px_1fr] items-center gap-y-[23px]">
                <label for="email" class="font-semibold text-[#23282d]">Email Address</label>
                <input id="email" type="text" value="info@kapitalvalue.com" class="h-[22px] w-[263px] border border-[#ddd] bg-white px-[5px] text-[#32373c]">
                <label class="col-start-2 flex h-[23px] items-center gap-[6px]"><input type="checkbox" class="size-[14px] appearance-none border border-[#b4b9be] bg-white"><span>Prevent <b class="font-semibold">plugins</b> and <b class="font-semibold">themes</b> from changing this</span></label>
                <label for="name" class="font-semibold text-[#23282d]">Name</label>
                <input id="name" type="text" value="Kapitalvalue web Contact Form" class="h-[22px] w-[263px] border border-[#ddd] bg-white px-[5px] text-[#32373c]">
                <label class="col-start-2 flex h-[23px] items-center gap-[6px]"><input type="checkbox" class="size-[14px] appearance-none border border-[#b4b9be] bg-white"><span>Prevent <b class="font-semibold">plugins</b> and <b class="font-semibold">themes</b> from changing this</span></label>
              </div>

              <h2 class="mt-[21px] text-[15px] leading-6 font-semibold text-[#23282d]">Validation</h2>
              <p class="mt-[11px] leading-4">E-mail addresses can be validated before sending e-mail, however this may fail with some newer domains.</p>
              <div class="mt-[18px] grid grid-cols-[188px_1fr] items-center">
                <span class="font-semibold text-[#23282d]">Email Address</span>
                <label class="flex h-[23px] items-center gap-[6px]"><input type="checkbox" class="size-[14px] appearance-none border border-[#b4b9be] bg-white">Disable e-mail validation</label>
              </div>

              <h2 class="mt-[25px] text-[15px] leading-6 font-semibold text-[#23282d]">Additional Email Addresses</h2>
              <p class="mt-[11px] leading-4">Separate multiple <b class="font-semibold">to/cc/bcc</b> recipients with commas.</p>
              <div class="mt-[18px] grid grid-cols-[188px_1fr] items-center gap-y-[26px] font-semibold text-[#23282d]">
                <label for="reply">Reply-To</label>
                <input id="reply" type="text" value="info@kapitalvalue.com" class="h-6 w-[263px] border border-[#ddd] bg-white px-[5px] font-normal text-[#32373c]">
                <label for="to">To Recipient(s)</label>
                <input id="to" type="text" class="h-6 w-[377px] border border-[#ddd] bg-white px-[5px] font-normal">
                <label for="cc">Carbon Copy Recipient(s)</label>
                <input id="cc" type="text" class="h-6 w-[377px] border border-[#ddd] bg-white px-[5px] font-normal">
                <label for="bcc">Blind Carbon Copy Recipient(s)</label>
                <input id="bcc" type="text" class="h-6 w-[377px] border border-[#ddd] bg-white px-[5px] font-normal">
              </div>

              <h2 class="mt-6 text-[15px] leading-6 font-semibold text-[#23282d]">Additional Headers</h2>
              <p class="mt-[11px] leading-4">Specify custom headers (e.g. <code class="bg-[#e0e0e0] px-1 py-[2px] font-[family-name:'DejaVu_Sans_Mono',monospace] text-[10px]">X-MC-Tags: wordpress-site-A</code> ), one per line. Use custom headers with caution as<br>they can negatively affect your Spam score.</p>
              <div class="mt-[17px] grid grid-cols-[188px_1fr] items-start">
                <label for="headers" class="pt-1 font-semibold text-[#23282d]">Custom Headers</label>
                <textarea id="headers" class="h-24 w-[371px] resize-none border border-[#ddd] bg-white"></textarea>
              </div>
            </form>
          </main>
        </div>
      </div>

      <!-- Scrollbar -->
      <div class="flex w-2 shrink-0 flex-col items-end overflow-hidden bg-[#f6f6f6] pt-[6px] pb-1" aria-hidden="true">
        <svg class="h-[5px] w-1" viewBox="0 0 4 5"><path d="M0 5l5-5v5z" fill="#444"/></svg>
        <div class="mt-[194px] mb-[122px] w-[6px] flex-1 bg-[#c1c1c1]"></div>
        <svg class="h-[5px] w-1" viewBox="0 0 4 5"><path d="M0 0h5v5z" fill="#444"/></svg>
      </div>

      <!-- Link target bubble -->
      <div class="absolute bottom-0 left-0 z-20 flex h-5 w-[280px] items-center rounded-tr-[3px] border border-b-0 border-l-0 border-[#c4c4c4] bg-[#f2f2f2] px-[3px] text-[11px] whitespace-nowrap text-[#666]">kapitalvalue.com/wp-admin/options-general.php?pa...</div>
    </div>
  </section>

  <!-- Taskbar -->
  <footer class="absolute inset-x-0 bottom-0 flex h-[29px] items-center overflow-hidden border-t border-[#999]/60 bg-[#a4a4a4]/62">
    <button type="button" aria-label="Start" class="flex w-[37px] shrink-0 justify-center"><svg class="size-[13px]" viewBox="0 0 13 13" fill="#fff"><path d="M0 2l5.500-1v5H0zM6.500 1L13 0v6H6.500zM0 7h5.500v5L0 11zM6.500 7H13v6l-6.500-1z"/></svg></button>
    <div class="-mr-6 grid h-full flex-1 grid-cols-21 [&>button]:flex [&>button]:items-center [&>button]:justify-center">
      <button type="button" aria-label="Photo"><svg class="size-[15px]" viewBox="0 0 16 16"><rect width="16" height="16" fill="#1d1719"/><path d="M3 3l5-2 2 7-3 7H1z" fill="#6d4a3c"/><rect x="12" width="4" height="16" fill="#d8d8d8"/></svg></button>
      <button type="button" aria-label="File Explorer" class="mr-[3px] border border-[#999] bg-white/20"><svg class="size-4" viewBox="0 0 16 16"><path d="M1 2h6l1 2h7v9H1z" fill="#f3d06a"/><path d="M1 6h14v7H1z" fill="#fbe9a4"/><path d="M3 14v-4q0-2 2-2h6q2 0 2 2v4h-3v-3H6v3z" fill="#4aa6dc"/></svg></button>
      <button type="button" aria-label="Outlook"><svg class="size-4" viewBox="0 0 16 16"><rect x="1" y="1" width="13" height="12" rx="3" fill="#fbe3b0" stroke="#e69a2c"/><circle cx="7" cy="7" r="4" fill="#fff" stroke="#e69a2c"/><path d="M5 5l2 3 4-5" stroke="#d8851a" fill="none" stroke-width="1.500"/><path d="M7 9h9v6H7zM7 9l4.500 3.500L16 9" fill="#fff" stroke="#d8a04a"/></svg></button>
      <button type="button" aria-label="Excel"><svg class="size-4" viewBox="0 0 16 16"><rect x="1" y="1" width="12" height="12" rx="3" fill="#fff" stroke="#2e7d3a" stroke-width="1.500"/><rect x="5" y="4" width="10" height="11" fill="#eef7ee" stroke="#2e7d3a"/><path d="M7 6l6 7M13 6l-6 7" stroke="#1f6b2c" stroke-width="2.200"/></svg></button>
      <button type="button" aria-label="Word" class="mr-[2px] border border-[#999] bg-white/20"><svg class="size-4" viewBox="0 0 16 16"><rect x="1" y="1" width="13" height="12" rx="3" fill="#fff" stroke="#4a72c0" stroke-width="1.500"/><rect x="5" y="3" width="10" height="11" fill="#f1f5fd" stroke="#7f9cd6"/><path d="M4 6l2 6 2.500-5 1 5L13 6" fill="none" stroke="#2550a6" stroke-width="2"/></svg></button>
      <button type="button" aria-label="Chrome" class="mr-[10px] border border-[#999] bg-white/60 shadow-[3px_0_0_#ddd,4px_0_0_#999,7px_0_0_#ddd,8px_0_0_#999]"><svg class="size-[15px]" viewBox="0 0 16 16"><circle cx="8" cy="8" r="8" fill="#fbc318"/><path d="M1 4a8 8 0 0 1 14 0l-7 0-3 5z" fill="#e2402f"/><path d="M1 4l4 6 3 2-1 4A8 8 0 0 1 1 4z" fill="#2d9e4c"/><circle cx="8" cy="8" r="3.800" fill="#fff"/><circle cx="8" cy="8" r="2.900" fill="#3b7ded"/></svg></button>
      <button type="button" aria-label="PowerPoint"><svg class="size-4" viewBox="0 0 16 16"><rect x="1" y="1" width="12" height="12" rx="3" fill="#fde8e0" stroke="#d9532c" stroke-width="1.500"/><rect x="5" y="5" width="10" height="10" fill="#fff" stroke="#e0704c"/><path d="M12.500 8a3 3 0 1 0 0 4M10 10h3" fill="none" stroke="#d93a1a" stroke-width="2"/></svg></button>
      <button type="button" aria-label="Tasks"><svg class="size-4" viewBox="0 0 16 16"><path d="M0 0h16v11l-4 5H0z" fill="#f5df0a"/><path d="M16 11l-4 5v-5z" fill="#fffbd0"/><path d="M4 7l3 3 5-6" stroke="#fff" stroke-width="2" fill="none"/></svg></button>
      <button type="button" aria-label="Firefox"><svg class="size-[15px]" viewBox="0 0 16 16"><circle cx="8" cy="8" r="7.500" fill="#e8681a"/><circle cx="7.500" cy="6.500" r="5.500" fill="#2a6db0"/><path d="M1 5q1 3 4 2 3 0 3 2-1 2-3 1 3 4 7 0 2-3 0-7 4 4 2 8-3 5-8 4-6-2-5-10z" fill="#f08a1c"/></svg></button>
      <button type="button" aria-label="Opera"><svg class="size-[15px]" viewBox="0 0 16 16"><path fill-rule="evenodd" d="M8 0a8 8 0 1 0 .1 0zM8 2.500c2 0 3 2.500 3 5.500s-1 5.500-3 5.500S5 11 5 8s1-5.500 3-5.500z" fill="#d3121f"/></svg></button>
      <button type="button" aria-label="Media tool"><svg class="size-[15px]" viewBox="0 0 16 16"><circle cx="8" cy="9" r="7" fill="#33566a"/><circle cx="4" cy="3" r="3" fill="#44606f"/><circle cx="12" cy="3" r="3" fill="#44606f"/><path d="M8 5l1 3 4 0-3 2 2 4-4-2-4 2 2-4-3-2h4z" fill="#a8d5e8"/></svg></button>
      <button type="button" aria-label="Media Player"><svg class="size-4" viewBox="0 0 16 16"><rect x=".5" y=".5" width="15" height="15" rx="1" fill="#cfe6f8" stroke="#4f9bd8"/><circle cx="8" cy="8" r="5.500" fill="#f28a12"/><path d="M6.500 5l4.500 3-4.500 3z" fill="#fff"/></svg></button>
      <button type="button" aria-label="Dropbox"><svg class="size-[15px]" viewBox="0 0 16 16" fill="#1081e8"><path d="M4.500 1L8 3.500 4.500 6 1 3.500zM11.500 1L15 3.500 11.500 6 8 3.500zM4.500 6L8 8.500 4.500 11 1 8.500zM11.500 6L15 8.500 11.500 11 8 8.500zM8 9.500l3.500 2.500L8 15l-3.500-3z"/></svg></button>
      <button type="button" aria-label="OpenOffice"><svg class="size-[15px]" viewBox="0 0 16 16"><circle cx="8" cy="8" r="8" fill="#1283c8"/><path d="M4 6q2-2 5 0 2 1 5-1M2 10q3-2 5 0 3 1 5-1" fill="none" stroke="#fff" stroke-width="1.500"/></svg></button>
      <button type="button" aria-label="PDF tool"><svg class="size-4" viewBox="0 0 16 16"><rect x="1" y="1" width="14" height="14" fill="#fff" stroke="#b5232c" stroke-width="2"/><path d="M4 4h5M4 7h2M4 12h8V7M6 9l6-5" fill="none" stroke="#c8323b" stroke-width="1.500"/></svg></button>
      <button type="button" aria-label="Spreadsheet"><svg class="size-4" viewBox="0 0 16 16"><rect x="1" y="1" width="12" height="12" rx="3" fill="#e7f0e4" stroke="#5f8a5a" stroke-width="1.500"/><rect x="5" y="4" width="10" height="11" fill="#fff" stroke="#6d9468"/><path d="M13 7H8v5h5M8 9.500h4" fill="none" stroke="#4f7a4a" stroke-width="1.500"/></svg></button>
      <button type="button" aria-label="VLC"><svg class="size-4" viewBox="0 0 16 16"><path d="M8 0l4 11H4z" fill="#f07c12"/><path d="M6.500 4h3l1 3h-5z" fill="#fff"/><path d="M3 10h10l3 5H0z" fill="#e46a0a"/></svg></button>
      <button type="button" aria-label="Pencil"><svg class="size-4" viewBox="0 0 16 16"><path d="M8 0l2 5H6z" fill="#333"/><path d="M6 5h4l2 7H4z" fill="#e8c7a0"/><path d="M8 5h2l2 9H8z" fill="#c8321c"/><path d="M4 11h4v4H4z" fill="#7d2a1a"/></svg></button>
      <button type="button" aria-label="XAMPP"><svg class="size-4" viewBox="0 0 16 16"><rect width="16" height="16" rx="2" fill="#f0701a"/><path d="M3 4h3q2 0 2 4-2 0-2 4H3v-3h2V7H3zM13 4h-3q-2 0-2 4 2 0 2 4h3V9h-2V7h2z" fill="none" stroke="#fff" stroke-width="1.500"/></svg></button>
      <button type="button" aria-label="Audacity"><svg class="size-[15px]" viewBox="0 0 16 16"><path d="M2 12V8a6 6 0 0 1 12 0v4" fill="none" stroke="#17178a" stroke-width="2.500"/><path d="M1 9h4v6H2zM15 9h-4v6h3z" fill="#17178a"/><path d="M5 9l3-4 3 4v6H5z" fill="#f7b80c"/><path d="M5 11h6" stroke="#e0301a" stroke-width="2"/></svg></button>
      <button type="button" aria-label="App"><svg class="size-4" viewBox="0 0 16 16"><circle cx="8" cy="8" r="8" fill="#1b9fc4"/></svg></button>
    </div>
  </footer>
</div>
</body>
</html>
